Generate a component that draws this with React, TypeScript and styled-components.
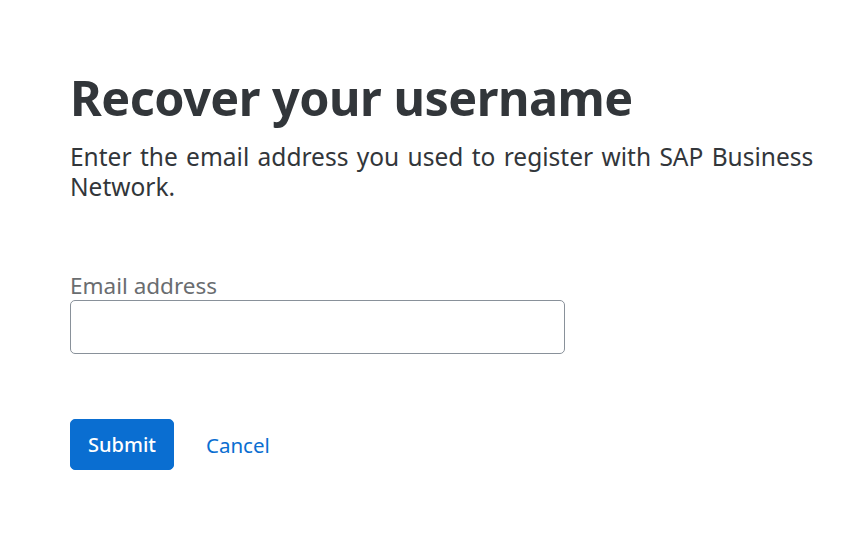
import React from "react";
import styled, { createGlobalStyle } from "styled-components";

const Global = createGlobalStyle`
  html, body { margin: 0; padding: 0; background: #ffffff; }
  body { font-family: "Noto Sans", "Open Sans", sans-serif; color: #32363a; }
  * { box-sizing: border-box; }
`;

const Page = styled.main`
  padding: 62px 20px 0 70px;
  display: flex;
  flex-direction: column;
  max-width: 852px;
`;

const Title = styled.h1`
  margin: 0;
  font-size: 48.5px;
  font-weight: 700;
  line-height: 70px;
  letter-spacing: -0.5px;
  color: #32363a;
`;

const Intro = styled.p`
  margin: 10px 0 0;
  max-width: 762px;
  font-size: 24.5px;
  line-height: 30px;
  word-spacing: 2px;
  color: #32363a;
`;

const Field = styled.div`
  margin-top: 69px;
  display: flex;
  flex-direction: column;
  width: 495px;
`;

const Label = styled.label`
  font-size: 22.5px;
  line-height: 29px;
  color: #6a6d70;
`;

const Input = styled.input`
  height: 54px;
  border: 1px solid #89919a;
  border-radius: 5px;
  font-size: 20px;
  padding: 0 12px;
  outline: none;
`;

const Actions = styled.div`
  margin-top: 65px;
  display: flex;
  align-items: center;
  gap: 32px;
`;

const Submit = styled.button`
  height: 51px;
  padding: 0 17px;
  border: 1px solid #0a6ed1;
  border-radius: 5px;
  background: #0a6ed1;
  color: #ffffff;
  font-family: inherit;
  font-size: 20px;
  font-weight: 500;
`;

const CancelLink = styled.a`
  color: #0a6ed1;
  font-size: 20.5px;
  text-decoration: none;
`;

export default function App() {
  return (
    <>
      <Global />
      <Page>
        <Title>Recover your username</Title>
        <Intro>
          Enter the email address you used to register with SAP Business Network.
        </Intro>
        <Field>
          <Label htmlFor="email">Email address</Label>
          <Input id="email" type="email" />
        </Field>
        <Actions>
          <Submit type="button">Submit</Submit>
          <CancelLink href="#">Cancel</CancelLink>
        </Actions>
      </Page>
    </>
  );
}
